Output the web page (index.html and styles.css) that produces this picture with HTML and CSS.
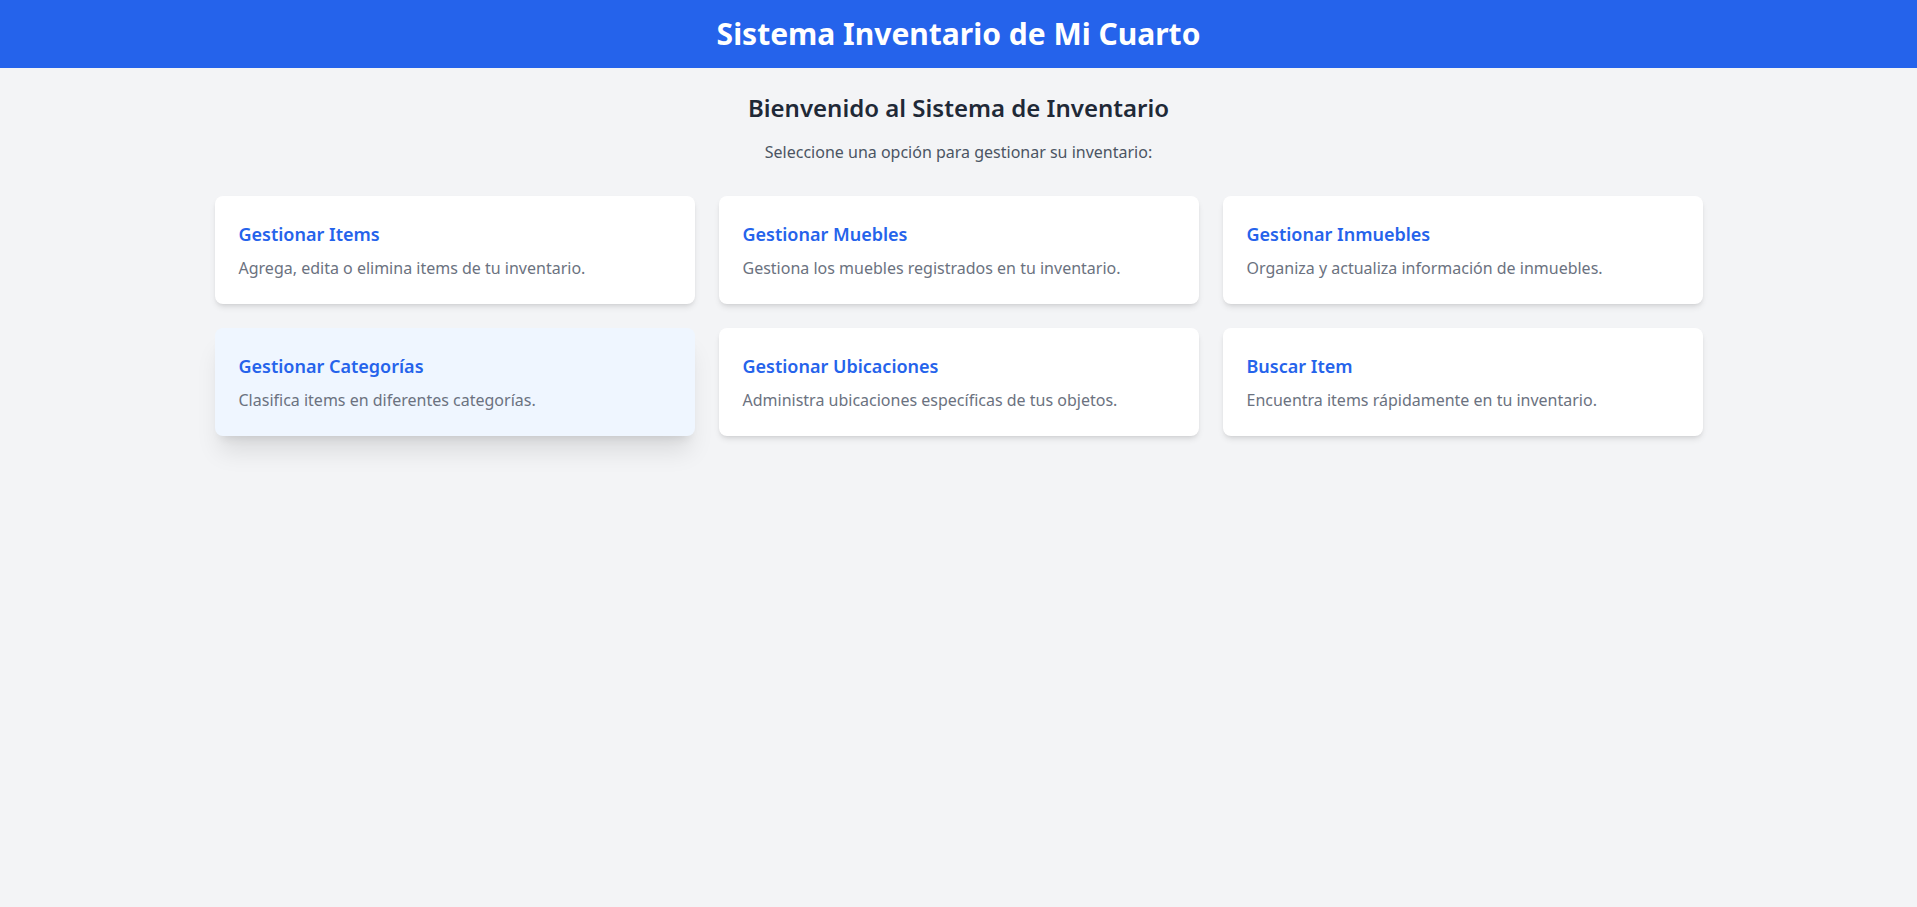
FILE: index.html
```html
<!DOCTYPE html>
<html lang="es">
<head>
<meta charset="utf-8">
<title>Sistema Inventario de Mi Cuarto</title>
<link rel="stylesheet" href="styles.css">
</head>
<body>
<header class="topbar">
  <h1 class="topbar-title">Sistema Inventario de Mi Cuarto</h1>
</header>
<main class="container">
  <h2 class="welcome">Bienvenido al Sistema de Inventario</h2>
  <p class="lead">Seleccione una opción para gestionar su inventario:</p>
  <div class="grid">
    <a class="card" href="#">
      <h3 class="card-title">Gestionar Items</h3>
      <p class="card-text">Agrega, edita o elimina items de tu inventario.</p>
    </a>
    <a class="card" href="#">
      <h3 class="card-title">Gestionar Muebles</h3>
      <p class="card-text">Gestiona los muebles registrados en tu inventario.</p>
    </a>
    <a class="card" href="#">
      <h3 class="card-title">Gestionar Inmuebles</h3>
      <p class="card-text">Organiza y actualiza información de inmuebles.</p>
    </a>
    <a class="card card-active" href="#">
      <h3 class="card-title">Gestionar Categorías</h3>
      <p class="card-text">Clasifica items en diferentes categorías.</p>
    </a>
    <a class="card" href="#">
      <h3 class="card-title">Gestionar Ubicaciones</h3>
      <p class="card-text">Administra ubicaciones específicas de tus objetos.</p>
    </a>
    <a class="card" href="#">
      <h3 class="card-title">Buscar Item</h3>
      <p class="card-text">Encuentra items rápidamente en tu inventario.</p>
    </a>
  </div>
</main>
</body>
</html>
```
FILE: styles.css
```css
* { box-sizing: border-box; }
html, body { margin: 0; padding: 0; }
body {
  font-family: "Noto Sans", "Open Sans", sans-serif;
  background: #f3f4f6;
  color: #1f2937;
  min-height: 100vh;
}
.topbar {
  background: #2563eb;
  padding: 16px 0;
  text-align: center;
}
.topbar-title {
  margin: 0;
  color: #ffffff;
  font-size: 30px;
  line-height: 36px;
  font-weight: 700;
}
.container {
  max-width: 1536px;
  margin: 0 auto;
  padding: 24px 24px;
}
.welcome {
  margin: 0 0 16px;
  text-align: center;
  font-size: 24px;
  line-height: 32px;
  font-weight: 600;
  color: #1f2937;
}
.lead {
  margin: 0 0 32px;
  text-align: center;
  font-size: 16px;
  line-height: 24px;
  color: #4b5563;
}
.grid {
  display: grid;
  grid-template-columns: repeat(3, 1fr);
  gap: 24px;
}
.card {
  display: block;
  background: #ffffff;
  border-radius: 8px;
  padding: 24px;
  text-decoration: none;
  box-shadow: 0 4px 6px -1px rgba(0,0,0,0.1), 0 2px 4px -2px rgba(0,0,0,0.1);
}
.card-active {
  background: #eff6ff;
  box-shadow: 0 20px 25px -5px rgba(0,0,0,0.1), 0 8px 10px -6px rgba(0,0,0,0.1);
}
.card-title {
  margin: 0;
  font-size: 18px;
  line-height: 28px;
  font-weight: 600;
  color: #2563eb;
}
.card-text {
  margin: 8px 0 0;
  font-size: 16px;
  line-height: 24px;
  color: #6b7280;
}
```
